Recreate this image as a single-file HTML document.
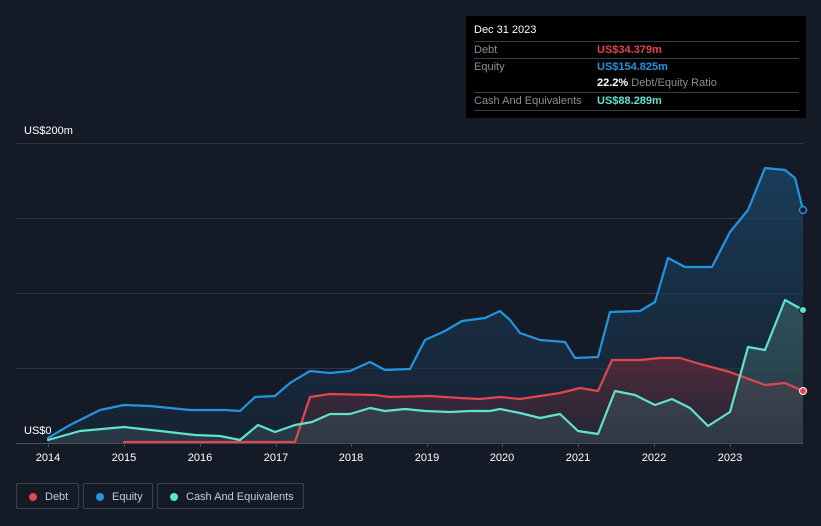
<!DOCTYPE html>
<html><head><style>
body{margin:0;width:821px;height:526px;background:#151b26;font-family:"Liberation Sans",sans-serif;overflow:hidden;position:relative}
.t{position:absolute;color:#fff;font-size:11px}
.tip{position:absolute;left:466px;top:16px;width:340px;height:102px;background:#000;}
.row{position:absolute;left:8px;width:325px;font-size:11px;color:#8a8f98;border-top:1px solid #3a3e45;height:17px;line-height:17px}
.v{position:absolute;left:123px;font-weight:bold}
.leg{position:absolute;top:483px;height:26px;border:1px solid #3b414c;border-radius:2px;color:#c8ccd2;font-size:11px;line-height:26px;box-sizing:border-box}
.dot{position:absolute;top:9px;width:8px;height:8px;border-radius:50%}
</style></head><body>
<svg width="821" height="526" style="position:absolute;left:0;top:0">
<defs>
<linearGradient id="ge" x1="0" y1="0" x2="0" y2="1"><stop offset="0" stop-color="#1b4a70" stop-opacity=".7"/><stop offset="1" stop-color="#1b3550" stop-opacity=".3"/></linearGradient>
<linearGradient id="gd" x1="0" y1="0" x2="0" y2="1"><stop offset="0" stop-color="#6a2a38" stop-opacity=".7"/><stop offset="1" stop-color="#3a2a38" stop-opacity=".4"/></linearGradient>
<linearGradient id="gc" x1="0" y1="0" x2="0" y2="1"><stop offset="0" stop-color="#3a6a6a" stop-opacity=".6"/><stop offset="1" stop-color="#3a4a55" stop-opacity=".5"/></linearGradient>
</defs>
<g stroke="#2e3440" stroke-width="1">
<line x1="16" y1="143.5" x2="803" y2="143.5"/><line x1="16" y1="218.5" x2="803" y2="218.5"/><line x1="16" y1="293.5" x2="803" y2="293.5"/><line x1="16" y1="368.5" x2="803" y2="368.5"/>
</g>
<polygon fill="url(#ge)" points="48,443 48,438 70,425 100,410 124,405 150,406 190,410 225,410 240,411 255,397 275,396 290,383 310,371 330,373 350,371 370,362 385,370 410,369 425,340 445,331 462,321 485,318 500,311 510,320 520,333 540,340 565,342 575,358 598,357 610,312 640,311 655,302 668,258 685,267 712,267 730,232 748,210 765,168 785,170 795,178 803,210 803,443"/>
<polygon fill="url(#gd)" points="295,443 310,397 330,394 375,395 390,397 430,396 460,398 480,399 500,397 520,399 540,396 560,393 580,388 598,391 612,360 640,360 660,358 680,358 700,364 730,372 765,385 785,383 803,391 803,443"/>
<polygon fill="url(#gc)" points="48,443 48,440 80,431 124,427 160,431 195,435 220,436 240,440 258,425 275,432 295,425 312,422 330,414 350,414 370,408 385,411 405,409 425,411 450,412 470,411 490,411 500,409 520,413 540,418 560,414 578,431 598,434 615,391 635,395 655,405 672,399 690,408 708,426 730,412 748,347 765,350 785,300 803,310 803,443"/>
<g fill="none" stroke-width="2.2" stroke-linejoin="round" stroke-linecap="round">
<polyline stroke="#2394df" points="48,438 70,425 100,410 124,405 150,406 190,410 225,410 240,411 255,397 275,396 290,383 310,371 330,373 350,371 370,362 385,370 410,369 425,340 445,331 462,321 485,318 500,311 510,320 520,333 540,340 565,342 575,358 598,357 610,312 640,311 655,302 668,258 685,267 712,267 730,232 748,210 765,168 785,170 795,178 803,210"/>
<polyline stroke="#e0464e" points="124,442 295,442 310,397 330,394 375,395 390,397 430,396 460,398 480,399 500,397 520,399 540,396 560,393 580,388 598,391 612,360 640,360 660,358 680,358 700,364 730,372 765,385 785,383 803,391"/>
<polyline stroke="#5fe3cf" points="48,440 80,431 124,427 160,431 195,435 220,436 240,440 258,425 275,432 295,425 312,422 330,414 350,414 370,408 385,411 405,409 425,411 450,412 470,411 490,411 500,409 520,413 540,418 560,414 578,431 598,434 615,391 635,395 655,405 672,399 690,408 708,426 730,412 748,347 765,350 785,300 803,310"/>
</g>
<line x1="16" y1="443.5" x2="803" y2="443.5" stroke="#4a505a"/>
<g stroke="#4a505a"><line x1="48.5" y1="443" x2="48.5" y2="447"/><line x1="124.5" y1="443" x2="124.5" y2="447"/><line x1="200.5" y1="443" x2="200.5" y2="447"/><line x1="276.5" y1="443" x2="276.5" y2="447"/><line x1="351.5" y1="443" x2="351.5" y2="447"/><line x1="427.5" y1="443" x2="427.5" y2="447"/><line x1="502.5" y1="443" x2="502.5" y2="447"/><line x1="578.5" y1="443" x2="578.5" y2="447"/><line x1="654.5" y1="443" x2="654.5" y2="447"/><line x1="730.5" y1="443" x2="730.5" y2="447"/></g>
<circle cx="803" cy="210" r="3.5" fill="#151b26" stroke="#2394df" stroke-width="1.5"/>
<circle cx="803" cy="310" r="3.5" fill="#5fe3cf" stroke="#151b26" stroke-width="1"/>
<circle cx="803" cy="391" r="3.5" fill="#e0464e" stroke="#fff" stroke-width="1"/>
<g fill="#fff" font-size="11" text-anchor="middle" font-family="Liberation Sans">
<text x="48" y="461">2014</text><text x="124" y="461">2015</text><text x="200" y="461">2016</text><text x="276" y="461">2017</text><text x="351" y="461">2018</text><text x="427" y="461">2019</text><text x="502" y="461">2020</text><text x="578" y="461">2021</text><text x="654" y="461">2022</text><text x="730" y="461">2023</text>
</g>
</svg>
<div class="t" style="left:24px;top:125px">US$200m</div>
<div class="t" style="left:24px;top:425px">US$0</div>
<div class="tip">
<div style="position:absolute;left:8px;top:8px;color:#fff;font-size:11px">Dec 31 2023</div>
<div class="row" style="top:25px">Debt<span class="v" style="color:#e0464e">US$34.379m</span></div>
<div class="row" style="top:42px">Equity<span class="v" style="color:#2394df">US$154.825m</span></div>
<div class="row" style="top:59px;border-top:none"><span class="v" style="color:#fff">22.2% <span style="color:#8a8f98;font-weight:normal">Debt/Equity Ratio</span></span></div>
<div class="row" style="top:76px;border-bottom:1px solid #3a3e45">Cash And Equivalents<span class="v" style="color:#5fe3cf">US$88.289m</span></div>
</div>
<div class="leg" style="left:16px;width:63px"><span class="dot" style="left:12px;background:#e0464e"></span><span style="position:absolute;left:28px">Debt</span></div>
<div class="leg" style="left:83px;width:70px"><span class="dot" style="left:12px;background:#2394df"></span><span style="position:absolute;left:28px">Equity</span></div>
<div class="leg" style="left:157px;width:147px"><span class="dot" style="left:12px;background:#5fe3cf"></span><span style="position:absolute;left:28px">Cash And Equivalents</span></div>
</body></html>
